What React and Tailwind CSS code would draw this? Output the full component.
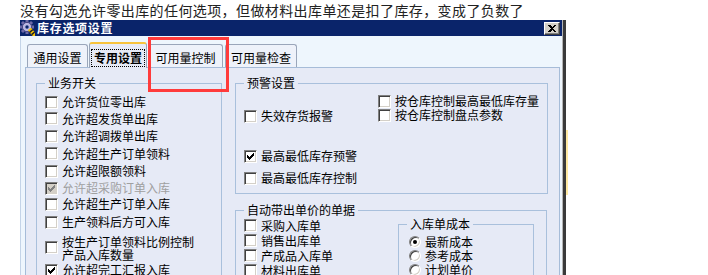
import React from "react";

const F = "font-['Noto_Sans_CJK_SC','Noto_Sans',sans-serif]";

function Check({ checked = false, disabled = false }) {
  const c = disabled ? "#808080" : "#000";
  return (
    <span
      className={`flex h-[13px] w-[13px] shrink-0 items-center justify-center border border-b-white border-l-[#808080] border-r-white border-t-[#808080] shadow-[inset_1px_1px_0_#404040,inset_-1px_-1px_0_#d4d0c8] ${
        disabled ? "bg-[#d4d0c8]" : "bg-white"
      }`}
    >
      {checked && (
        <svg width="7" height="7" viewBox="0 0 7 7" shapeRendering="crispEdges">
          <rect x="0" y="2" width="1" height="3" fill={c} />
          <rect x="1" y="3" width="1" height="3" fill={c} />
          <rect x="2" y="4" width="1" height="3" fill={c} />
          <rect x="3" y="3" width="1" height="3" fill={c} />
          <rect x="4" y="2" width="1" height="3" fill={c} />
          <rect x="5" y="1" width="1" height="3" fill={c} />
          <rect x="6" y="0" width="1" height="3" fill={c} />
        </svg>
      )}
    </span>
  );
}

function Radio({ checked = false }) {
  return (
    <span className="flex h-[12px] w-[12px] shrink-0 items-center justify-center rounded-full border border-b-white border-l-[#808080] border-r-white border-t-[#808080] bg-white shadow-[inset_1px_1px_0_#404040,inset_-1px_-1px_0_#d4d0c8]">
      {checked && <span className="h-[4px] w-[4px] rounded-full bg-black" />}
    </span>
  );
}

function CRow({ h, label, checked, disabled, gap = "gap-[4px]" }) {
  return (
    <div className={`flex items-center ${gap} ${h}`}>
      <Check checked={checked} disabled={disabled} />
      <span
        className={`whitespace-nowrap text-[12px] leading-[14px] ${
          disabled ? "text-[#a0a0a0]" : "text-black"
        }`}
      >
        {label}
      </span>
    </div>
  );
}

function RRow({ label, checked }) {
  return (
    <div className="flex h-[14px] items-center gap-[4px]">
      <Radio checked={checked} />
      <span className="whitespace-nowrap text-[12px] leading-[14px] text-black">{label}</span>
    </div>
  );
}

function Legend({ children }) {
  return (
    <legend className="px-[3px] text-[12px] leading-[14px] text-black">{children}</legend>
  );
}

function TitleIcon() {
  return (
    <svg width="15" height="16" viewBox="0 0 15 16">
      <g fill="#6d6aa8">
        <rect x="5.5" y="0" width="3" height="3" />
        <rect x="5.5" y="11" width="3" height="3" />
        <rect x="0" y="5.5" width="3" height="3" />
        <rect x="11" y="5.5" width="3" height="3" />
        <rect x="1.5" y="1.5" width="3" height="3" transform="rotate(45 3 3)" />
        <rect x="9.5" y="1.5" width="3" height="3" transform="rotate(45 11 3)" />
        <rect x="1.5" y="9.5" width="3" height="3" transform="rotate(45 3 11)" />
      </g>
      <circle cx="7" cy="7" r="4.6" fill="#b9b7e2" stroke="#4b4884" strokeWidth="1" />
      <circle cx="7" cy="7" r="1.7" fill="#0a246a" />
      <g transform="rotate(-40 12 12)">
        <rect x="10" y="8" width="4" height="9" fill="#f5c400" />
        <rect x="10" y="10" width="4" height="1.5" fill="#222" />
        <rect x="10" y="13" width="4" height="1.5" fill="#222" />
      </g>
    </svg>
  );
}

export default function App() {
  return (
    <div className={`relative h-[275px] w-[708px] overflow-hidden bg-white ${F}`}>
      <div className="h-[20px] whitespace-nowrap pl-[20px] text-[14px] leading-[20px] tracking-[0.4px] text-[#222]">
        没有勾选允许零出库的任何选项，但做材料出库单还是扣了库存，变成了负数了
      </div>

      <div className="flex items-start">
        <div className="ml-[20px] w-[546px] border-r-[3px] border-r-[#3a3a3a]">
          <div className="border-r border-r-[#b4b4b4]">
            {/* title bar */}
            <div className="flex h-[16px] items-center bg-[#0a246a]">
              <TitleIcon />
              <span className="ml-[2px] text-[12px] font-bold leading-[16px] tracking-[0.7px] text-white">
                库存选项设置
              </span>
              <div className="ml-auto mr-[2px] flex h-[13px] w-[16px] items-center justify-center border border-b-[#404040] border-l-white border-r-[#404040] border-t-white bg-[#d4d0c8] shadow-[inset_-1px_-1px_0_#808080]">
                <svg width="8" height="7" viewBox="0 0 8 7" shapeRendering="crispEdges">
                  <path d="M0 0 L2 0 L4 2 L6 0 L8 0 L5 3.5 L8 7 L6 7 L4 5 L2 7 L0 7 L3 3.5 Z" fill="#000" />
                </svg>
              </div>
            </div>

            {/* body */}
            <div className="border-l border-l-[#c4d4e8] bg-[#eef6fd] pl-[4px] pr-[2px] pt-[6px]">
              {/* tabs */}
              <div className="flex h-[25px] items-end pl-[2px]">
                <div className="flex h-[23px] w-[61px] items-center justify-center rounded-t-[3px] border border-b-0 border-[#9aa6ba] bg-[#eef2fa] pt-[4px] text-[12px] leading-[14px] text-black">
                  通用设置
                </div>
                <div className="relative z-10 -mb-[1px] ml-[1px] flex h-[26px] w-[58px] flex-col rounded-t-[3px] border border-b-0 border-[#9aa6ba] border-t-[2px] border-t-[#f7c33c] bg-[#e6eaf6] px-[1px] pb-[1px] pt-[5px]">
                  <span className="flex flex-1 items-center justify-center border border-dotted border-black text-[12px] font-bold leading-[14px] text-black">
                    专用设置
                  </span>
                </div>
                <div className="ml-[1px] flex h-[23px] w-[75px] items-center justify-center rounded-t-[3px] border border-b-0 border-[#9aa6ba] bg-[#eef2fa] pt-[4px] text-[12px] leading-[14px] text-black">
                  可用量控制
                </div>
                <div className="ml-[2px] flex h-[23px] w-[72px] items-center justify-center rounded-t-[3px] border border-b-0 border-[#9aa6ba] bg-[#eef2fa] pt-[4px] text-[12px] leading-[14px] text-black">
                  可用量检查
                </div>
              </div>

              {/* panel */}
              <div className="flex h-[210px] items-start border border-[#a6bcd8] bg-[#e6eaf6] pl-[10px] pt-[8px]">
                {/* left group */}
                <fieldset className="w-[186px] border border-[#a9c0dc] px-[8px] pb-[10px]">
                  <Legend>业务开关</Legend>
                  <div className="flex flex-col pt-[4px]">
                    <CRow h="h-[16px]" label="允许货位零出库" />
                    <CRow h="h-[17px]" label="允许超发货单出库" />
                    <CRow h="h-[18px]" label="允许超调拨单出库" />
                    <CRow h="h-[17px]" label="允许超生产订单领料" />
                    <CRow h="h-[18px]" label="允许超限额领料" />
                    <CRow h="h-[16px]" label="允许超采购订单入库" checked disabled />
                    <CRow h="h-[16px]" label="允许超生产订单入库" />
                    <CRow h="h-[20px]" label="生产领料后方可入库" />
                    <div className="flex h-[31px] items-center gap-[4px]">
                      <Check />
                      <span className="whitespace-nowrap text-[12px] leading-[13px] text-black">
                        按生产订单领料比例控制
                        <br />
                        产品入库数量
                      </span>
                    </div>
                    <CRow h="h-[14px]" label="允许超完工汇报入库" checked />
                  </div>
                </fieldset>

                {/* right groups */}
                <div className="ml-[13px] flex w-[312px] flex-col">
                  <fieldset className="h-[118px] border border-[#a9c0dc] px-[8px]">
                    <Legend>预警设置</Legend>
                    <div className="flex">
                      <div className="flex w-[134px] flex-col">
                        <div className="h-[19px]" />
                        <CRow h="h-[14px]" label="失效存货报警" />
                        <div className="h-[26px]" />
                        <CRow h="h-[14px]" label="最高最低库存预警" checked />
                        <div className="h-[8px]" />
                        <CRow h="h-[14px]" label="最高最低库存控制" />
                      </div>
                      <div className="flex flex-col pt-[4px]">
                        <CRow h="h-[14px]" label="按仓库控制最高最低库存量" />
                        <CRow h="h-[14px]" label="按仓库控制盘点参数" />
                      </div>
                    </div>
                  </fieldset>

                  <fieldset className="mt-[9px] border border-[#a9c0dc] px-[8px] pb-[10px]">
                    <Legend>自动带出单价的单据</Legend>
                    <div className="flex items-start">
                      <div className="flex w-[154px] flex-col pt-[1px]">
                        <CRow h="h-[15px]" label="采购入库单" />
                        <CRow h="h-[15px]" label="销售出库单" />
                        <CRow h="h-[15px]" label="产成品入库单" />
                        <CRow h="h-[15px]" label="材料出库单" />
                      </div>
                      <fieldset className="w-[136px] border border-[#a9c0dc] px-[8px] pb-[10px]">
                        <Legend>入库单成本</Legend>
                        <div className="flex flex-col pl-[2px] pt-[4px]">
                          <RRow label="最新成本" checked />
                          <RRow label="参考成本" />
                          <RRow label="计划单价" />
                        </div>
                      </fieldset>
                    </div>
                  </fieldset>
                </div>
              </div>
            </div>
          </div>
        </div>
        <div className="mt-[110px] h-[65px] w-[2px] bg-[#ffe9a0]" />
      </div>

      {/* red annotation box */}
      <div className="absolute left-[148px] top-[37px] h-[55px] w-[81px] border-[3px] border-[#ff3b3b]" />
    </div>
  );
}
